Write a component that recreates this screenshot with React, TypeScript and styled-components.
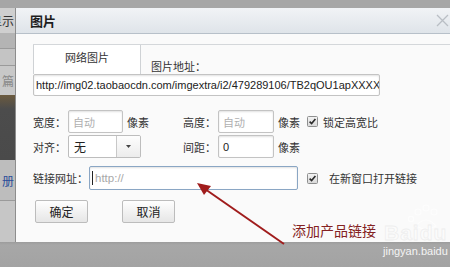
import { createGlobalStyle, styled } from 'styled-components'

const GlobalStyle = createGlobalStyle`
  html, body {
    margin: 0;
    padding: 0;
    background: #a4a4a4;
  }
  * {
    box-sizing: border-box;
  }
`

const cjk = `"Noto Sans CJK SC", "Liberation Sans", sans-serif`
const latin = `"Liberation Sans", "Noto Sans CJK SC", sans-serif`

export default function App() {
  return (
    <>
      <GlobalStyle />
      <Screen>
        <TopShade />
        <Middle>
          <PageSliver>
            <Slice h={25} bg="#cfcfcf">
              <SliceText color="#333">显示</SliceText>
            </Slice>
            <Slice h={15} bg="#b4b4b4" />
            <Slice h={17} bg="#c4c4c4" line />
            <Slice h={30} bg="#c8c8c8" line>
              <SliceText color="#8a8a8a">篇</SliceText>
            </Slice>
            <Slice h={65} bg="linear-gradient(#6b5a3e 0, #4c4c4c 14px, #4a4a4a 100%)" />
            <Slice h={40} bg="#bdbdbd">
              <SliceText color="#2a4d9a">册</SliceText>
            </Slice>
            <Slice h={42} bg="#c6c6c6" line />
          </PageSliver>

          <Dialog>
            <TitleBar>
              <Title>图片</Title>
              <CloseIcon width="13" height="13" viewBox="0 0 13 13">
                <path d="M1 1 L12 12 M12 1 L1 12" stroke="#b9bec4" strokeWidth="1.3" />
              </CloseIcon>
            </TitleBar>

            <Body>
              <TabRow>
                <Tab>网络图片</Tab>
                <TabLabel>图片地址：</TabLabel>
              </TabRow>
              <UrlField>http://img02.taobaocdn.com/imgextra/i2/479289106/TB2qOU1apXXXX</UrlField>

              <FormRow top={14}>
                <Label>宽度：</Label>
                <TextBox placeholderText>自动</TextBox>
                <Unit>像素</Unit>
                <Label>高度：</Label>
                <TextBox placeholderText>自动</TextBox>
                <Unit>像素</Unit>
                <CheckLabel>
                  <CheckBox />
                  锁定高宽比
                </CheckLabel>
              </FormRow>

              <FormRow top={2}>
                <Label>对齐：</Label>
                <Select>
                  <SelectValue>无</SelectValue>
                  <SelectArrow>
                    <svg width="5" height="3" viewBox="0 0 5 3">
                      <path d="M0 0 H5 L2.5 3 Z" fill="#444" />
                    </svg>
                  </SelectArrow>
                </Select>
                <Label>间距：</Label>
                <TextBox>0</TextBox>
                <Unit>像素</Unit>
              </FormRow>

              <LinkRow>
                <LinkLabel>链接网址：</LinkLabel>
                <LinkField>
                  <Caret />
                  http://
                </LinkField>
                <CheckLabel wide>
                  <CheckBox />
                  在新窗口打开链接
                </CheckLabel>
              </LinkRow>

              <ButtonRow>
                <Button>确定</Button>
                <Button>取消</Button>
              </ButtonRow>
            </Body>
          </Dialog>
        </Middle>
        <BottomShade />

        <Annotation width="450" height="267" viewBox="0 0 450 267">
          <line x1="284" y1="244" x2="205" y2="189" stroke="#a01c1c" strokeWidth="2" />
          <path d="M197 183 L211 186 L204 195 Z" fill="#a01c1c" />
          <g fill="none" stroke="rgba(255,255,255,0.6)" strokeWidth="1.2">
            <circle cx="418" cy="212" r="3" />
            <circle cx="426" cy="208" r="3" />
            <circle cx="434" cy="212" r="3" />
            <circle cx="411" cy="219" r="2.6" />
            <path d="M416 226 Q426 214 436 226 Q426 232 416 226 Z" />
          </g>
        </Annotation>
        <Callout>添加产品链接</Callout>
        <WatermarkLogo>Baidu</WatermarkLogo>
        <WatermarkUrl>jingyan.baidu</WatermarkUrl>
      </Screen>
    </>
  )
}

const Screen = styled.div`
  position: relative;
  width: 450px;
  height: 267px;
  overflow: hidden;
  background: #a4a4a4;
  display: flex;
  flex-direction: column;
  font-family: ${cjk};
  font-size: 11px;
  color: #333;
`

const TopShade = styled.div`
  height: 8px;
  flex: 0 0 8px;
  background: #a6a6a6;
`

const Middle = styled.div`
  display: flex;
  height: 234px;
  flex: 0 0 234px;
`

const BottomShade = styled.div`
  flex: 1;
  background: linear-gradient(#9c9c9c, #a7a7a7 3px, #a3a3a3);
`

const PageSliver = styled.div`
  width: 15px;
  flex: 0 0 15px;
  display: flex;
  flex-direction: column;
  overflow: hidden;
`

const Slice = styled.div<{ h: number; bg: string; line?: boolean }>`
  height: ${(p) => p.h}px;
  flex: 0 0 ${(p) => p.h}px;
  background: ${(p) => p.bg};
  border-top: ${(p) => (p.line ? '1px solid #9a9a9a' : 'none')};
  display: flex;
  align-items: center;
  justify-content: flex-end;
  overflow: hidden;
`

const SliceText = styled.span<{ color: string }>`
  font-size: 12px;
  color: ${(p) => p.color};
  white-space: nowrap;
  margin-right: 1px;
`

const Dialog = styled.div`
  flex: 0 0 445px;
  background: #fafafa;
  border-left: 1px solid #8d8d8d;
  display: flex;
  flex-direction: column;
`

const TitleBar = styled.div`
  height: 26px;
  flex: 0 0 26px;
  display: flex;
  align-items: center;
  justify-content: space-between;
  padding: 0 11px 0 14px;
  background: linear-gradient(#f1f3f6, #dfe4e9);
  border-bottom: 1px solid #b7c0c9;
`

const Title = styled.div`
  font-size: 13px;
  font-weight: bold;
  color: #1e1e1e;
`

const CloseIcon = styled.svg`
  display: block;
`

const Body = styled.div`
  padding: 10px 0 0 17px;
  display: flex;
  flex-direction: column;
`

const TabRow = styled.div`
  display: flex;
  height: 30px;
  border-top: 1px solid #d4d7da;
`

const Tab = styled.div`
  width: 108px;
  height: 29px;
  background: #fff;
  border-left: 1px solid #cfd2d5;
  border-right: 1px solid #cfd2d5;
  display: flex;
  justify-content: center;
  padding-top: 5px;
  line-height: 14px;
`

const TabLabel = styled.div`
  align-self: flex-end;
  margin-left: 10px;
  padding-bottom: 1px;
  line-height: 14px;
`

const fieldBase = `
  background: #fff;
  border: 1px solid #c3c3c3;
  border-radius: 2px;
  box-shadow: inset 0 1px 2px rgba(0, 0, 0, 0.12);
  display: flex;
  align-items: center;
  overflow: hidden;
  white-space: nowrap;
`

const UrlField = styled.div`
  ${fieldBase}
  width: 347px;
  height: 22px;
  padding-left: 2px;
  font-family: ${latin};
  font-size: 11px;
  color: #222;
`

const FormRow = styled.div<{ top: number }>`
  display: grid;
  grid-template-columns: 35px 55px 60px 35px 56px 33px auto;
  align-items: center;
  margin-top: ${(p) => p.top}px;
  height: 23px;
`

const Label = styled.div`
  line-height: 14px;
`

const TextBox = styled.div<{ placeholderText?: boolean }>`
  ${fieldBase}
  height: 23px;
  padding-left: 4px;
  color: ${(p) => (p.placeholderText ? '#b0b0b0' : '#222')};
  font-family: ${(p) => (p.placeholderText ? cjk : latin)};
`

const Unit = styled.div`
  padding-left: 4px;
  line-height: 14px;
`

const Select = styled.div`
  ${fieldBase}
  grid-column: span 2;
  width: 73px;
  height: 23px;
  box-shadow: none;
  border-color: #bdbdbd;
`

const SelectValue = styled.div`
  flex: 1;
  padding-left: 5px;
  font-size: 12px;
  color: #222;
`

const SelectArrow = styled.div`
  width: 24px;
  height: 100%;
  border-left: 1px solid #c8c8c8;
  background: linear-gradient(#fdfdfd, #ececec);
  display: flex;
  align-items: center;
  justify-content: center;
`

const CheckLabel = styled.div<{ wide?: boolean }>`
  display: flex;
  align-items: center;
  gap: ${(p) => (p.wide ? 11 : 5)}px;
  line-height: 14px;
  white-space: nowrap;
`

const CheckBox = () => (
  <svg width="11" height="11" viewBox="0 0 11 11">
    <defs>
      <linearGradient id="cbg" x1="0" y1="0" x2="0" y2="1">
        <stop offset="0" stopColor="#f4f4f4" />
        <stop offset="1" stopColor="#d8d8d8" />
      </linearGradient>
    </defs>
    <rect x="0.5" y="0.5" width="10" height="10" rx="1" fill="url(#cbg)" stroke="#8e8f8f" />
    <path d="M2.6 5.6 L4.6 7.6 L8.4 3" fill="none" stroke="#2b2b2b" strokeWidth="1.6" />
  </svg>
)

const LinkRow = styled.div`
  display: flex;
  align-items: center;
  margin-top: 8px;
  height: 24px;
`

const LinkLabel = styled.div`
  width: 56px;
  line-height: 14px;
`

const LinkField = styled.div`
  ${fieldBase}
  width: 209px;
  height: 24px;
  padding-left: 2px;
  border-color: #8aa6c4;
  color: #a8a8a8;
  font-family: ${latin};
  font-size: 11.5px;
  margin-right: 9px;
`

const Caret = styled.span`
  width: 1px;
  height: 14px;
  background: #222;
  margin-right: 2px;
`

const ButtonRow = styled.div`
  display: flex;
  gap: 34px;
  margin-top: 10px;
  padding-left: 2px;
`

const Button = styled.div`
  width: 53px;
  height: 23px;
  border: 1px solid #bcbcbc;
  border-radius: 2px;
  background: linear-gradient(#fefefe, #e6e6e6);
  display: flex;
  align-items: center;
  justify-content: center;
  font-size: 12px;
  color: #222;
`

const Annotation = styled.svg`
  position: absolute;
  left: 0;
  top: 0;
  pointer-events: none;
`

const Callout = styled.div`
  position: absolute;
  left: 292px;
  top: 221px;
  font-size: 14px;
  line-height: 18px;
  color: #842222;
  white-space: nowrap;
`

const WatermarkLogo = styled.div`
  position: absolute;
  left: 384px;
  top: 222px;
  font-family: ${latin};
  font-size: 21px;
  font-weight: bold;
  line-height: 22px;
  color: rgba(255, 255, 255, 0.35);
  -webkit-text-stroke: 0.8px rgba(235, 235, 235, 0.8);
  letter-spacing: 1px;
  white-space: nowrap;
`

const WatermarkUrl = styled.div`
  position: absolute;
  left: 383px;
  top: 244px;
  font-family: ${latin};
  font-size: 11px;
  line-height: 14px;
  color: #f4f4f4;
  white-space: nowrap;
`
